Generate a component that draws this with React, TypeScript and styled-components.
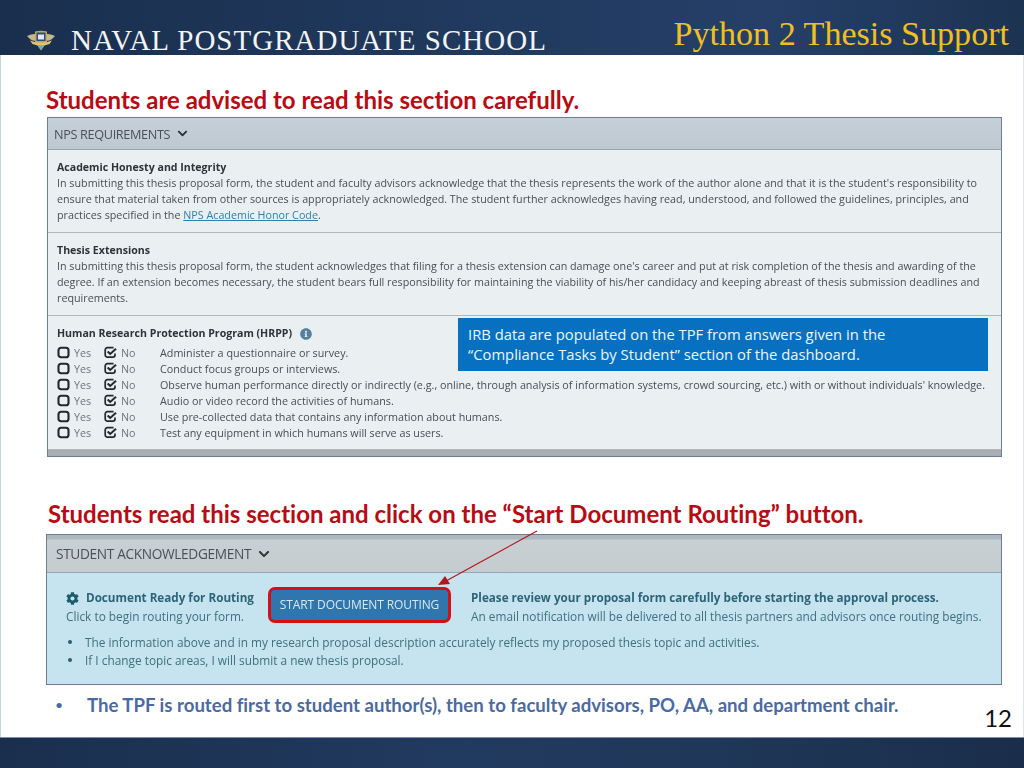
import React from "react";
import styled, { createGlobalStyle } from "styled-components";
import { FaChevronDown, FaCog, FaInfoCircle } from "react-icons/fa";

const Global = createGlobalStyle`
  html, body { margin: 0; padding: 0; background: #fff; }
  #root { width: 1024px; height: 768px; overflow: hidden; }
`;

const Slide = styled.div`
  width: 1024px; height: 768px; display: flex; flex-direction: column; overflow: hidden;
  font-family: "Lato", "Open Sans", sans-serif; font-variant-ligatures: none;
`;
const Header = styled.header`
  height: 55px; flex: none; box-sizing: border-box; position: relative;
  display: flex; align-items: flex-end; justify-content: space-between;
  padding: 0 15px 0 27px;
  background: linear-gradient(90deg, #1a2f4e 0%, #213a5f 50%, #253f68 75%, #1d3352 100%);
`;
const Brand = styled.div`display: flex; align-items: flex-end; gap: 16px;`;
const BrandName = styled.div`
  font-family: "Liberation Serif", serif; font-size: 29px; line-height: 30px; color: #f2f4f6;
  letter-spacing: 1.01px; white-space: nowrap; margin-bottom: 0;
`;
const Title = styled.div`
  font-family: "Liberation Serif", serif; font-size: 34.1px; line-height: 38px; color: #f0c020;
  white-space: nowrap; align-self: flex-start; margin-top: 15px;
`;
const Main = styled.main`
  flex: 1; position: relative; box-sizing: border-box; border-left: 1px solid #c8d2ea;
  border-right: 1px solid #dfe4ee; display: flex; flex-direction: column; background: #fff;
`;
const Heading = styled.h2<{ $left: number; $top: number }>`
  margin: ${p => p.$top}px 0 0 ${p => p.$left}px; font-size: 24px; line-height: 30px; font-weight: 700;
  color: #b80b14; white-space: nowrap;
`;
const Panel = styled.section<{ $left: number; $width: number; $height: number; $top: number }>`
  margin: ${p => p.$top}px 0 0 ${p => p.$left}px; width: ${p => p.$width}px; height: ${p => p.$height}px;
  flex: none; box-sizing: border-box; border: 1px solid #6f7d92; display: flex; flex-direction: column;
  font-family: "Open Sans", sans-serif; overflow: hidden;
`;
const Blurred = styled.div<{ $bg: string }>`
  flex: 1; display: flex; flex-direction: column; background: ${p => p.$bg}; filter: blur(0.35px); min-height: 0;
`;
const PanelBar = styled.div<{ $h: number; $bg: string; $size: number; $pad: number }>`
  height: ${p => p.$h}px; flex: none; box-sizing: border-box; display: flex; align-items: center; gap: 7px;
  padding-left: ${p => p.$pad}px; background: ${p => p.$bg}; border-bottom: 1px solid #98a5b3;
  font-size: ${p => p.$size}px; color: #4a5058; white-space: nowrap; letter-spacing: -0.35px;
  svg { color: #27303a; }
`;
const Block = styled.div<{ $h: number }>`
  height: ${p => p.$h}px; flex: none; box-sizing: border-box; padding: 10px 0 0 9px;
  border-bottom: 1px solid #b0b6ba; position: relative;
`;
const BlockTitle = styled.div`
  font-size: 10.6px; line-height: 15px; font-weight: 700; color: #2d3338; white-space: nowrap;
  display: flex; align-items: center; gap: 8px; svg { color: #54809f; }
`;
const Line = styled.div`
  font-size: 10.74px; line-height: 16px; color: #474f55; white-space: nowrap;
`;
const Link = styled.span`color: #2f7fb0; text-decoration: underline;`;
const Rows = styled.div`margin-top: 3px;`;
const Row = styled.div`
  display: grid; grid-template-columns: 47px 56px 1fr; height: 16px; align-items: center;
  font-size: 10.78px; color: #474f55; white-space: nowrap;
`;
const Opt = styled.span`
  display: flex; align-items: center; gap: 4px; color: #6d757b;
  svg { color: #22282d; flex: none; }
`;
const Band = styled.div`height: 6px; flex: none; margin-top: auto; background: #a7adb3;`;
const Callout = styled.div`
  position: absolute; left: 457px; top: 263px; width: 530px; height: 53px; box-sizing: border-box;
  padding: 6px 0 0 10px; background: #0870c0; color: #eef6fb; font-family: "Open Sans", sans-serif;
  font-size: 14.8px; line-height: 20px; white-space: nowrap;
`;
const AckBody = styled.div`
  flex: 1; padding: 14px 0 0 19px; color: #41707f; font-size: 11.85px; position: relative;
`;
const AckRow = styled.div`display: flex; align-items: flex-start;`;
const AckLeft = styled.div`width: 202px; flex: none; margin-top: 2px;`;
const AckRight = styled.div`margin: 2px 0 0 20px;`;
const AckBold = styled.div`
  font-weight: 700; font-size: 11.68px; line-height: 18px; color: #2d6477; white-space: nowrap;
  display: flex; align-items: center; gap: 7px;
  svg { color: #1e5a69; }
`;
const AckLine = styled.div`line-height: 18px; white-space: nowrap;`;
const Routing = styled.button`
  width: 183px; height: 36px; flex: none; box-sizing: border-box; margin-top: 0; padding: 0 0 2px;
  border: 3px solid #d50f14; border-radius: 7px; background: #2e76ad; color: #d9e8f2;
  font-family: "Open Sans", sans-serif; font-size: 12px; letter-spacing: -0.1px; white-space: nowrap;
`;
const Notes = styled.ul`margin: 8px 0 0; padding: 0; list-style: none;`;
const Note = styled.li`
  line-height: 18px; white-space: nowrap; display: flex; align-items: center; gap: 13px;
  &::before { content: ""; width: 4px; height: 4px; border-radius: 50%; background: #2d5f70; flex: none; margin-left: 2px; }
`;
const Foot = styled.div`
  flex: 1; display: flex; justify-content: space-between; padding: 8px 11px 5px 54px;
`;
const Bullet = styled.div`
  display: flex; font-size: 18.6px; font-weight: 700; line-height: 24px; color: #4a6aa3; white-space: nowrap;
  &::before { content: "•"; font-size: 14px; font-weight: 400; width: 32px; flex: none; }
`;
const PageNo = styled.div`
  align-self: flex-end; font-size: 24px; line-height: 28px; color: #111;
`;
const Arrow = styled.svg`position: absolute; left: 0; top: 0; pointer-events: none;`;
const Footer = styled.footer`
  height: 31px; flex: none; border-top: 1px solid #7d8db0; box-sizing: border-box;
  background: linear-gradient(90deg, #1a2f4e 0%, #213a5f 45%, #1f3758 70%, #1a2e4b 100%);
`;

const Logo = () => (
  <svg width="28" height="21" viewBox="0 0 28 21" style={{ marginBottom: 4 }}>
    <path d="M0 6 Q5 3.5 9 4 V11 Q5 11 3 9Z" fill="#c4b88e" />
    <path d="M28 6 Q23 3.5 19 4 V11 Q23 11 25 9Z" fill="#c4b88e" />
    <path d="M8 1.5 Q14 0 20 1.5 V12 L14 20.5 L8 12Z" fill="#c6a94f" />
    <path d="M9.5 2.5 H18.5 V11 H9.5Z" fill="#2b4a86" />
    <path d="M11 4.5 H17 V9.5 H11Z" fill="#e3e8f0" />
    <path d="M3 10.5 Q14 15 25 10.5 L22.5 14 Q14 17 5.5 14Z" fill="#e2c66c" />
    <path d="M10.5 15.5 H17.5 L14 20Z" fill="#7ea2b6" />
  </svg>
);

const EmptyBox = () => (
  <svg width="13" height="13" viewBox="0 0 13 13">
    <rect x="1.5" y="1.75" width="10" height="9.5" rx="2.6" fill="none" stroke="currentColor" strokeWidth="2.1" />
  </svg>
);

const CheckedBox = () => (
  <svg width="13" height="13" viewBox="0 0 13 13" fill="none" stroke="currentColor">
    <path d="M9.5 1.7 H3.4 a2.2 2.2 0 0 0 -2.2 2.2 v5 a2.2 2.2 0 0 0 2.2 2.2 h5.4 a2.2 2.2 0 0 0 2.2 -2.2 V7.4" strokeWidth="1.7" />
    <path d="M3.6 5.5 L6.2 8 L12 2.8" strokeWidth="2" />
  </svg>
);

const humans = [
  "Administer a questionnaire or survey.",
  "Conduct focus groups or interviews.",
  "Observe human performance directly or indirectly (e.g., online, through analysis of information systems, crowd sourcing, etc.) with or without individuals' knowledge.",
  "Audio or video record the activities of humans.",
  "Use pre-collected data that contains any information about humans.",
  "Test any equipment in which humans will serve as users.",
];

export default function App() {
  return (
    <Slide>
      <Global />
      <Header>
        <Brand>
          <Logo />
          <BrandName>NAVAL POSTGRADUATE SCHOOL</BrandName>
        </Brand>
        <Title>Python 2 Thesis Support</Title>
      </Header>
      <Main>
        <Heading $left={45} $top={30}>Students are advised to read this section carefully.</Heading>
        <Panel $left={46} $width={955} $height={340} $top={2}>
          <Blurred $bg="#eaeff2">
            <PanelBar $h={32} $size={12.7} $pad={6} $bg="linear-gradient(#c6d0d9, #bdc8d1)">
              NPS REQUIREMENTS <FaChevronDown size={11} />
            </PanelBar>
            <Block $h={83}>
              <BlockTitle>Academic Honesty and Integrity</BlockTitle>
              <Line>In submitting this thesis proposal form, the student and faculty advisors acknowledge that the thesis represents the work of the author alone and that it is the student's responsibility to</Line>
              <Line>ensure that material taken from other sources is appropriately acknowledged. The student further acknowledges having read, understood, and followed the guidelines, principles, and</Line>
              <Line>practices specified in the <Link>NPS Academic Honor Code</Link>.</Line>
            </Block>
            <Block $h={83}>
              <BlockTitle>Thesis Extensions</BlockTitle>
              <Line>In submitting this thesis proposal form, the student acknowledges that filing for a thesis extension can damage one's career and put at risk completion of the thesis and awarding of the</Line>
              <Line>degree. If an extension becomes necessary, the student bears full responsibility for maintaining the viability of his/her candidacy and keeping abreast of thesis submission deadlines and</Line>
              <Line>requirements.</Line>
            </Block>
            <Block $h={134}>
              <BlockTitle>Human Research Protection Program (HRPP) <FaInfoCircle size={12} /></BlockTitle>
              <Rows>
                {humans.map(text => (
                  <Row key={text}>
                    <Opt><EmptyBox />Yes</Opt>
                    <Opt><CheckedBox />No</Opt>
                    <span>{text}</span>
                  </Row>
                ))}
              </Rows>
            </Block>
            <Band />
          </Blurred>
        </Panel>
        <Callout>
          IRB data are populated on the TPF from answers given in the
          <br />
          “Compliance Tasks by Student” section of the dashboard.
        </Callout>
        <Heading $left={47} $top={42}>Students read this section and click on the “Start Document Routing” button.</Heading>
        <Panel $left={45} $width={956} $height={151} $top={5}>
          <Blurred $bg="#c6e3f0">
            <PanelBar $h={38} $size={13.7} $pad={9} $bg="linear-gradient(#aeb8c0 0, #aeb8c0 4px, #c8d0d4 5px, #c4ccd0 100%)">
              STUDENT ACKNOWLEDGEMENT <FaChevronDown size={12} />
            </PanelBar>
            <AckBody>
              <AckRow>
                <AckLeft>
                  <AckBold><FaCog size={13} />Document Ready for Routing</AckBold>
                  <AckLine>Click to begin routing your form.</AckLine>
                </AckLeft>
                <Routing>START DOCUMENT ROUTING</Routing>
                <AckRight>
                  <AckBold>Please review your proposal form carefully before starting the approval process.</AckBold>
                  <AckLine>An email notification will be delivered to all thesis partners and advisors once routing begins.</AckLine>
                </AckRight>
              </AckRow>
              <Notes>
                <Note>The information above and in my research proposal description accurately reflects my proposed thesis topic and activities.</Note>
                <Note>If I change topic areas, I will submit a new thesis proposal.</Note>
              </Notes>
            </AckBody>
          </Blurred>
        </Panel>
        <Foot>
          <Bullet>The TPF is routed first to student author(s), then to faculty advisors, PO, AA, and department chair.</Bullet>
          <PageNo>12</PageNo>
        </Foot>
        <Arrow width="1024" height="682" viewBox="0 55 1024 682">
          <line x1="536" y1="531" x2="445" y2="581" stroke="#b8141c" strokeWidth="1.2" />
          <polygon points="437,585 444,576 449,584" fill="#b8141c" />
        </Arrow>
      </Main>
      <Footer />
    </Slide>
  );
}
